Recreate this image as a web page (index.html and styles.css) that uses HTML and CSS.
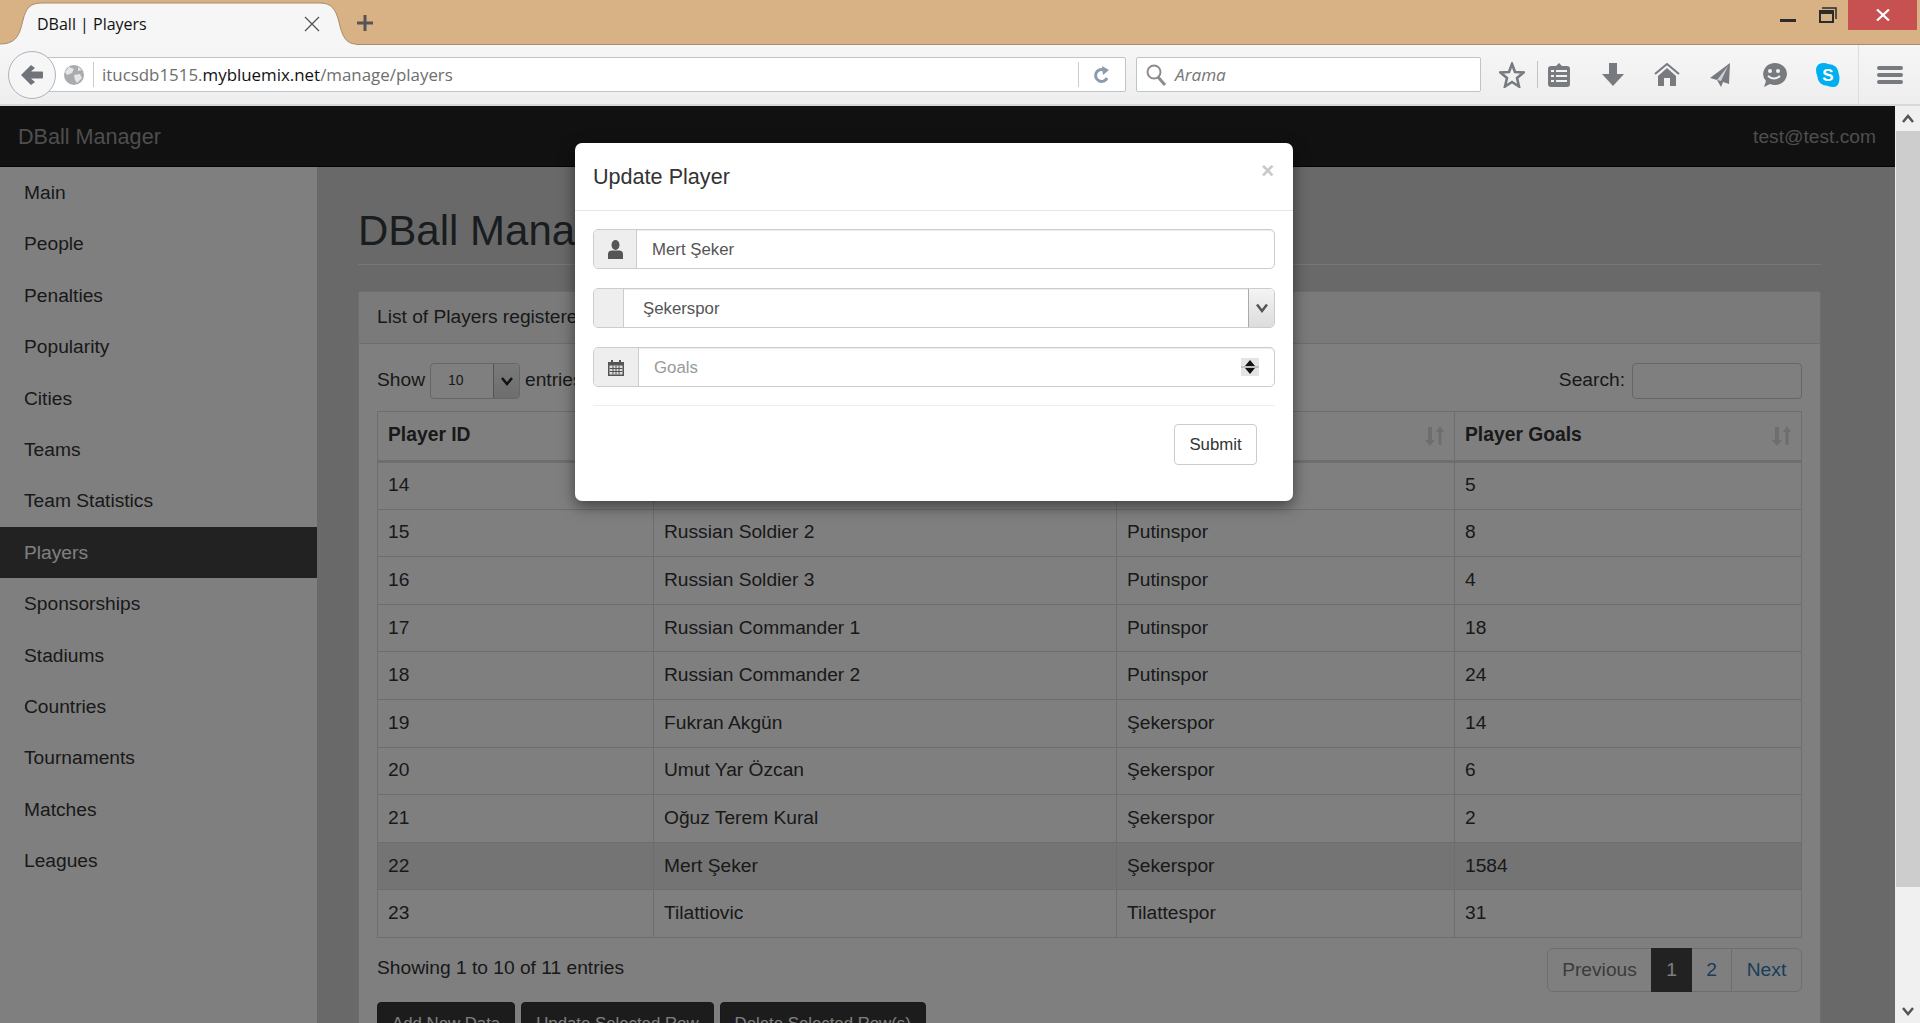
FILE: index.html
```html
<!DOCTYPE html>
<html lang="en">
<head>
    <meta charset="UTF-8">
    <title>DBall | Players</title>
    <link rel="stylesheet" href="styles.css">
</head>

<body>
    <header class="browser">
        <div class="tab-strip">
            <div class="tab">
                <svg class="tab-shape" width="356" height="45" viewBox="0 0 356 45"><path d="M0 45 V44 C18 44 20 32 23 20 C26 8 30 3 42 3 H320 C332 3 336 10 339 22 C342 36 346 44 356 44 V45 Z" fill="#f6f6f6"/><path d="M0 44 C18 44 20 32 23 20 C26 8 30 3 42 3 H320 C332 3 336 10 339 22 C342 36 346 44 356 44" fill="none" stroke="#a58c6a" stroke-width="1"/></svg>
                <span class="tab-title">DBall | Players</span>
                <svg class="tab-close" width="18" height="18" viewBox="0 0 18 18"><path d="M2 2 L16 16 M16 2 L2 16" stroke="#555" stroke-width="1.3" fill="none"/></svg>
            </div>
            <svg class="new-tab" width="20" height="20" viewBox="0 0 20 20"><path d="M10 2 V18 M2 10 H18" stroke="#555" stroke-width="3" fill="none"/></svg>
            <div class="win-controls">
                <svg class="win-min" width="16" height="3" viewBox="0 0 16 3"><rect width="16" height="3" fill="#2b2b2b"/></svg>
                <svg class="win-restore" width="18" height="16" viewBox="0 0 18 16"><path d="M3 1 H17 V12" stroke="#2b2b2b" stroke-width="1.5" fill="none"/><rect x="1" y="4" width="13" height="11" stroke="#2b2b2b" stroke-width="2" fill="none"/><rect x="1" y="4" width="13" height="3" fill="#2b2b2b"/></svg>
                <div class="win-close"><svg width="14" height="12" viewBox="0 0 14 12"><path d="M1 0.500 L13 11.500 M13 0.500 L1 11.500" stroke="#fff" stroke-width="2.200" fill="none"/></svg></div>
            </div>
        </div>
        <div class="toolbar">
            <div class="back-btn"><svg width="24" height="22" viewBox="0 0 24 22"><path d="M11 1 L1 11 L11 21 L15 18 L11 14.500 H22 Q23 14.500 23 13.500 V8.500 Q23 7.500 22 7.500 H11 L15 4 Z" fill="#70747a"/></svg></div>
            <div class="url-bar">
                <svg class="globe" width="22" height="22" viewBox="0 0 22 22"><circle cx="11" cy="11" r="10" fill="#a9abad"/><path d="M6 3 L11 5 L9 9 L4 11 L2 8 Z M11 11 L17 10 L19 14 L14 19 L12 16 Z M15 3 L19 6 L15 7 Z" fill="#e6e6e6"/></svg>
                <span class="url-text">itucsdb1515.<b>mybluemix.net</b>/manage/players</span>
                <span class="reload"><svg width="18" height="20" viewBox="0 0 18 20"><path d="M14 13 A6 6 0 1 1 11 5" stroke="#8a9bb0" stroke-width="3" fill="none"/><path d="M9 1 L16 5 L10 10 Z" fill="#8a9bb0"/></svg></span>
            </div>
            <div class="search-bar">
                <svg width="22" height="24" viewBox="0 0 22 24"><circle cx="9" cy="9" r="6.5" stroke="#8c8c8c" stroke-width="2" fill="none"/><path d="M13 14 L20 22" stroke="#8c8c8c" stroke-width="3"/></svg>
                <span>Arama</span>
            </div>
            <div class="tools">
                <svg class="tool-star" width="26" height="26" viewBox="0 0 26 26"><path d="M13 2 L16 10 L24.500 10.500 L18 16 L20 24.500 L13 20 L6 24.500 L8 16 L1.500 10.500 L10 10 Z" stroke="#777a7f" stroke-width="2.600" fill="none"/></svg>
                <span class="tool-sep"></span>
                <svg class="tool-clip" width="22" height="26" viewBox="0 0 22 26"><path d="M3 4 H8 L11 1 L14 4 H19 Q22 4 22 7 V22 Q22 25 19 25 H3 Q0 25 0 22 V7 Q0 4 3 4 Z" fill="#777a7f"/><path d="M3 9 H6 M8 9 H19 M3 14 H6 M8 14 H19 M3 19 H6 M8 19 H19" stroke="#f2f2f2" stroke-width="2"/></svg>
                <svg class="tool-down" width="22" height="24" viewBox="0 0 22 24"><path d="M7 0 H15 V11 H22 L11 23 L0 11 H7 Z" fill="#777a7f"/></svg>
                <svg class="tool-home" width="26" height="24" viewBox="0 0 26 24"><path d="M1 11 L13 1 L25 11" stroke="#777a7f" stroke-width="2" fill="none"/><path d="M13 5 L22 13 V23 H16 V15 H10 V23 H4 V13 Z" fill="#777a7f"/></svg>
                <svg class="tool-send" width="22" height="26" viewBox="0 0 22 26"><path d="M21 1 L1 16 L8 18 L12 25 L14 20 L20 22 Z" fill="#777a7f"/><path d="M8 18 L19 4 L12 19 Z" fill="#cfd0d2"/></svg>
                <svg class="tool-chat" width="26" height="26" viewBox="0 0 26 26"><path d="M13 1 A12 11 0 1 1 9 22 L3 25 L5 19 A12 11 0 0 1 13 1 Z" fill="#777a7f"/><circle cx="9" cy="9" r="2" fill="#f2f2f2"/><circle cx="17" cy="9" r="2" fill="#f2f2f2"/><path d="M7 14 Q13 19 19 14" stroke="#f2f2f2" stroke-width="2" fill="none"/></svg>
                <svg class="tool-skype" width="24" height="26" viewBox="0 0 24 26"><path d="M7 1 Q11 1 12 2 Q22 2 23 13 Q24 15 23 20 Q22 25 17 25 Q14 25 12 24 Q2 24 1 13 Q0 11 0 7 Q1 1 7 1 Z" fill="#00aff0"/><text x="12" y="19" class="skype-s">S</text></svg>
                <span class="tool-sep tool-sep-tall"></span>
                <svg class="tool-menu" width="26" height="20" viewBox="0 0 26 20"><path d="M2 3 H24 M2 10 H24 M2 17 H24" stroke="#777a7f" stroke-width="4" stroke-linecap="round"/></svg>
            </div>
        </div>
    </header>

    <div class="viewport">
        <div class="page">
            <nav class="navbar">
                <a class="brand">DBall Manager</a>
                <a class="nav-user">test@test.com</a>
            </nav>
            <div class="wrapper">
                <aside class="sidebar">
                    <a>Main</a>
                    <a>People</a>
                    <a>Penalties</a>
                    <a>Popularity</a>
                    <a>Cities</a>
                    <a>Teams</a>
                    <a>Team Statistics</a>
                    <a class="active">Players</a>
                    <a>Sponsorships</a>
                    <a>Stadiums</a>
                    <a>Countries</a>
                    <a>Tournaments</a>
                    <a>Matches</a>
                    <a>Leagues</a>
                </aside>
                <main class="content">
                    <h1>DBall Manager</h1>
                    <section class="panel">
                        <div class="panel-heading">List of Players registered in DBall</div>
                        <div class="panel-body">
                            <div class="table-top">
                                <div class="show-entries">
                                    <span>Show</span>
                                    <div class="mini-select"><span class="mini-value">10</span><span class="mini-arrow"><svg width="14" height="10" viewBox="0 0 14 10"><path d="M2 2 L7 8 L12 2" stroke="#222" stroke-width="2.500" fill="none"/></svg></span></div>
                                    <span>entries</span>
                                </div>
                                <label class="table-search"><span>Search:</span><input type="text"></label>
                            </div>
                            <table>
                                <thead>
                                    <tr>
                                        <th class="col-id">Player ID</th>
                                        <th class="col-name">Player Name</th>
                                        <th class="col-team">Player Team<svg class="sort-icon" width="20" height="20" viewBox="0 0 20 20"><path d="M4 1 H8 V14 H11 L6 20 L1 14 H4 Z M12 6 L16 0 L20 6 H17.500 V19 H14.500 V6 Z" fill="#dcdcdc"/></svg></th>
                                        <th>Player Goals<svg class="sort-icon" width="20" height="20" viewBox="0 0 20 20"><path d="M4 1 H8 V14 H11 L6 20 L1 14 H4 Z M12 6 L16 0 L20 6 H17.500 V19 H14.500 V6 Z" fill="#dcdcdc"/></svg></th>
                                    </tr>
                                </thead>
                                <tbody>
                                    <tr><td>14</td><td>Russian Soldier 1</td><td>Putinspor</td><td>5</td></tr>
                                    <tr><td>15</td><td>Russian Soldier 2</td><td>Putinspor</td><td>8</td></tr>
                                    <tr><td>16</td><td>Russian Soldier 3</td><td>Putinspor</td><td>4</td></tr>
                                    <tr><td>17</td><td>Russian Commander 1</td><td>Putinspor</td><td>18</td></tr>
                                    <tr><td>18</td><td>Russian Commander 2</td><td>Putinspor</td><td>24</td></tr>
                                    <tr><td>19</td><td>Fukran Akgün</td><td>Şekerspor</td><td>14</td></tr>
                                    <tr><td>20</td><td>Umut Yar Özcan</td><td>Şekerspor</td><td>6</td></tr>
                                    <tr><td>21</td><td>Oğuz Terem Kural</td><td>Şekerspor</td><td>2</td></tr>
                                    <tr class="selected"><td>22</td><td>Mert Şeker</td><td>Şekerspor</td><td>1584</td></tr>
                                    <tr><td>23</td><td>Tilattiovic</td><td>Tilattespor</td><td>31</td></tr>
                                </tbody>
                            </table>
                            <div class="table-bottom">
                                <span>Showing 1 to 10 of 11 entries</span>
                                <div class="pagination">
                                    <a class="page-prev">Previous</a>
                                    <a class="page-current">1</a>
                                    <a class="page-two">2</a>
                                    <a class="page-next">Next</a>
                                </div>
                            </div>
                            <div class="actions">
                                <button>Add New Data</button>
                                <button>Update Selected Row</button>
                                <button>Delete Selected Row(s)</button>
                            </div>
                        </div>
                    </section>
                </main>
            </div>

            <div class="backdrop">
                <div class="modal">
                    <div class="modal-header">
                        <h4>Update Player</h4>
                        <span class="modal-close">×</span>
                    </div>
                    <form class="modal-body">
                        <div class="input-group">
                            <span class="addon addon-user"><svg width="15" height="19" viewBox="0 0 15 19"><ellipse cx="7.500" cy="5" rx="4" ry="5" fill="#555"/><path d="M0 19 V14 Q0 10.500 4 10.500 H11 Q15 10.500 15 14 V19 Z" fill="#555"/></svg></span>
                            <input type="text" value="Mert Şeker">
                        </div>
                        <div class="input-group">
                            <span class="addon addon-blank"></span>
                            <select><option>Şekerspor</option></select>
                            <span class="select-arrow"><svg width="14" height="10" viewBox="0 0 14 10"><path d="M2 1.500 L7 8 L12 1.500" stroke="#555" stroke-width="2.500" fill="none"/></svg></span>
                        </div>
                        <div class="input-group">
                            <span class="addon addon-goals"><svg width="16" height="17" viewBox="0 0 16 17"><path d="M0 3 H3 V1 H5 V3 H11 V1 H13 V3 H16 V17 H0 Z" fill="#555"/><path d="M1.500 6.500 H14.500 V15.500 H1.500 Z" fill="#ddd"/><path d="M1.500 9.500 H14.500 M1.500 12.500 H14.500 M5 6.500 V15.500 M8 6.500 V15.500 M11 6.500 V15.500" stroke="#555" stroke-width="1"/></svg></span>
                            <input type="text" placeholder="Goals">
                            <span class="spinner"><svg width="18" height="18" viewBox="0 0 18 18"><rect width="18" height="18" fill="#e4e4e4"/><path d="M0 9 H18" stroke="#999" stroke-width="1"/><path d="M9 2 L14 8 H4 Z M9 16 L14 10 H4 Z" fill="#111"/></svg></span>
                        </div>
                        <hr>
                        <div class="modal-actions">
                            <button type="submit">Submit</button>
                        </div>
                    </form>
                </div>
            </div>
        </div>

        <div class="scrollbar">
            <span class="scroll-arrow"><svg width="14" height="10" viewBox="0 0 14 10"><path d="M2 8 L7 2 L12 8" stroke="#555" stroke-width="2.500" fill="none"/></svg></span>
            <span class="scroll-thumb"></span>
            <span class="scroll-arrow"><svg width="14" height="10" viewBox="0 0 14 10"><path d="M2 2 L7 8 L12 2" stroke="#555" stroke-width="2.500" fill="none"/></svg></span>
        </div>
    </div>
</body>
</html>
```

FILE: styles.css
```css
* {
    box-sizing: border-box;
}

html, body {
    height: 100%;
}

body {
    margin: 0;
    font-family: "Liberation Sans", Arial, sans-serif;
    color: #333;
    overflow: hidden;
    display: flex;
    flex-direction: column;
}

/* browser window */
.browser {
    flex: none;
    height: 106px;
    font-family: "Open Sans", sans-serif;
}

.tab-strip {
    height: 45px;
    background-color: #d8b284;
    border-bottom: 1px solid #a58c6a;
    display: flex;
    align-items: flex-start;
}

.tab {
    position: relative;
    flex: none;
    width: 356px;
    height: 45px;
    display: flex;
    align-items: center;
    justify-content: space-between;
    padding: 3px 35px 0 37px;
    font-size: 16px;
    color: #111;
}

.tab-shape {
    position: absolute;
    left: 0;
    top: 0;
}

.tab-title, .tab-close {
    position: relative;
}

.new-tab {
    margin: 13px 0 0 -1px;
}

.win-controls {
    margin-left: auto;
    margin-right: 3px;
    display: flex;
    align-items: flex-start;
}

.win-min {
    margin: 19px 23px 0 0;
}

.win-restore {
    margin: 7px 11px 0 0;
}

.win-close {
    width: 69px;
    height: 30px;
    background-color: #c75050;
    display: flex;
    align-items: center;
    justify-content: center;
}

.toolbar {
    height: 61px;
    background: linear-gradient(#f6f6f6, #eeeeee);
    border-bottom: 2px solid #d8d8d8;
    display: flex;
    align-items: center;
    padding-left: 8px;
    position: relative;
}

.back-btn {
    width: 48px;
    height: 48px;
    border-radius: 50%;
    border: 1px solid #aab4c0;
    background-color: #f6f6f6;
    display: flex;
    align-items: center;
    justify-content: center;
    position: relative;
    z-index: 1;
    flex: none;
}

.url-bar {
    width: 1078px;
    height: 35px;
    margin-left: -8px;
    padding-left: 14px;
    background-color: #fff;
    border: 1px solid #bcc4cc;
    border-radius: 0 2px 2px 0;
    display: flex;
    align-items: center;
    font-size: 16.900px;
    color: #6e6e6e;
}

.globe {
    margin-right: 8px;
}

.url-text {
    border-left: 1px solid #ccc;
    padding-left: 8px;
    line-height: 25px;
}

.url-text b {
    font-weight: 400;
    color: #111;
}

.reload {
    margin-left: auto;
    width: 47px;
    height: 25px;
    border-left: 1px solid #ccc;
    display: flex;
    align-items: center;
    justify-content: center;
}

.search-bar {
    width: 345px;
    height: 35px;
    margin-left: 10px;
    padding-left: 8px;
    background-color: #fff;
    border: 1px solid #bcc4cc;
    border-radius: 2px;
    display: flex;
    align-items: center;
    gap: 8px;
    font-size: 17.200px;
    font-style: italic;
    color: #777;
}

.tools {
    display: flex;
    align-items: center;
    flex: 1;
    height: 100%;
}

.tool-star {
    margin-left: 18px;
}

.tool-sep {
    width: 1px;
    height: 27px;
    margin: 0 9.500px 0 12px;
    background-color: #c4c4c4;
}

.tool-sep-tall {
    height: 100%;
    margin: 0 18px;
    background-color: #dedede;
}

.tool-down {
    margin-left: 32px;
}

.tool-home {
    margin-left: 30px;
}

.tool-send {
    margin-left: 29px;
}

.tool-chat {
    margin-left: 30px;
}

.tool-skype {
    margin-left: 29px;
}

.skype-s {
    font-family: "Liberation Sans", sans-serif;
    font-size: 17px;
    font-weight: 700;
    fill: #fff;
    text-anchor: middle;
}

/* page under the dialog */
.viewport {
    flex: 1;
    display: flex;
    min-height: 0;
}

.page {
    flex: 1;
    position: relative;
    overflow: hidden;
    font-size: 19.200px;
}

.navbar {
    height: 61px;
    background-color: #222;
    border-bottom: 1px solid #080808;
    display: flex;
    align-items: center;
    justify-content: space-between;
    padding: 2px 19px 0 18px;
    color: #9d9d9d;
}

.brand {
    font-size: 21.600px;
}

.nav-user {
    font-size: 19.200px;
}

.wrapper {
    display: flex;
    align-items: flex-start;
}

.sidebar {
    width: 317px;
    flex: none;
    height: 1000px;
    background-color: #fff;
    display: flex;
    flex-direction: column;
}

.sidebar a {
    height: 51.400px;
    flex: none;
    padding-left: 24px;
    line-height: 52px;
    color: #333;
}

.sidebar a.active {
    background-color: #444;
    color: #fff;
}

.content {
    flex: 1;
    height: 1000px;
    background-color: #d3d3d3;
    padding: 0 74px 0 41px;
}

.content h1 {
    margin: 41px 0 0;
    height: 57px;
    border-bottom: 1px solid #eee;
    font-size: 42px;
    font-weight: 400;
    line-height: 46px;
    color: #333a40;
    white-space: nowrap;
}

.panel {
    margin-top: 26px;
    background-color: #fff;
    border-radius: 4px;
    border: 1px solid #ddd;
}

.panel-heading {
    height: 52px;
    background-color: #f5f5f5;
    border-bottom: 1px solid #ddd;
    padding-left: 18px;
    line-height: 50px;
}

.panel-body {
    padding: 18px 18px 0;
}

.table-top {
    display: flex;
    justify-content: space-between;
    align-items: center;
    height: 37px;
}

.show-entries {
    display: flex;
    align-items: center;
    gap: 5px;
}

.show-entries > span {
    padding-bottom: 2px;
}

.mini-select {
    width: 90px;
    height: 36px;
    border: 1px solid #ccc;
    border-radius: 4px;
    display: flex;
    justify-content: space-between;
    overflow: hidden;
    background-color: #fff;
}

.mini-value {
    font-size: 14px;
    line-height: 33px;
    padding-left: 17px;
}

.mini-arrow {
    width: 26px;
    background: linear-gradient(#f4f4f4, #dcdcdc);
    border-left: 1px solid #aaa;
    display: flex;
    align-items: center;
    justify-content: center;
}

.table-search {
    display: flex;
    align-items: center;
    gap: 7px;
}

.table-search span {
    padding-bottom: 1px;
}

.table-search input {
    width: 170px;
    height: 36px;
    border: 1px solid #ccc;
    border-radius: 4px;
}

table {
    width: 100%;
    margin-top: 12px;
    border-collapse: collapse;
    table-layout: fixed;
}

th, td {
    border: 1px solid #ddd;
    padding: 0 10px;
    text-align: left;
}

th {
    height: 50px;
    padding-bottom: 2px;
    border-bottom-width: 3px;
    font-size: 19.300px;
    position: relative;
}

td {
    height: 47.600px;
    padding-bottom: 1px;
}

.col-id {
    width: 276px;
}

.col-name {
    width: 463px;
}

.col-team {
    width: 338px;
}

.sort-icon {
    position: absolute;
    right: 10px;
    top: 14px;
}

tr.selected td {
    background-color: #e8e8e8;
}

.table-bottom {
    display: flex;
    justify-content: space-between;
    align-items: flex-start;
    margin-top: 10px;
}

.table-bottom > span {
    margin-top: 9px;
}

.pagination {
    display: flex;
    height: 44px;
    border: 1px solid #ddd;
    border-radius: 6px;
    line-height: 42px;
    color: #337ab7;
}

.pagination a {
    text-align: center;
}

.page-prev {
    width: 103px;
    color: #777;
}

.page-current {
    width: 41px;
    margin: -1px 0;
    line-height: 44px;
    background-color: #444;
    color: #fff;
}

.page-two {
    width: 40px;
    border-right: 1px solid #ddd;
}

.page-next {
    width: 69px;
}

.actions {
    display: flex;
    gap: 6px;
    margin-top: 10px;
}

.actions button {
    height: 44px;
    padding: 0 14px;
    background-color: #383838;
    border: 1px solid #333;
    border-radius: 4px;
    color: #fff;
    font-family: inherit;
    font-size: 16.800px;
}

/* dialog */
.backdrop {
    position: absolute;
    inset: 0;
    background-color: rgba(0, 0, 0, 0.5);
    padding: 37px 0 0 575px;
}

.modal {
    width: 718px;
    height: 358px;
    background-color: #fff;
    border-radius: 7px;
    box-shadow: 0 5px 15px rgba(0, 0, 0, 0.5);
    font-size: 16.800px;
}

.modal-header {
    height: 68px;
    border-bottom: 1px solid #e5e5e5;
    display: flex;
    justify-content: space-between;
    align-items: flex-start;
    padding: 0 18px;
}

.modal-header h4 {
    margin: 21px 0 0;
    font-size: 21.600px;
    font-weight: 400;
    line-height: 26px;
}

.modal-close {
    margin: 16px 1px 0 0;
    font-size: 22px;
    font-weight: 700;
    line-height: 24px;
    color: #c8c8c8;
}

.modal-body {
    padding: 18px 18px 0;
    display: flex;
    flex-direction: column;
    gap: 19px;
}

.input-group {
    height: 40px;
    display: flex;
    border: 1px solid #ccc;
    border-radius: 5px;
    overflow: hidden;
    background-color: #fff;
    box-shadow: inset 0 1px 1px rgba(0, 0, 0, 0.075);
}

.addon {
    flex: none;
    background-color: #eee;
    border-right: 1px solid #ccc;
    display: flex;
    align-items: center;
    justify-content: center;
}

.addon-user {
    width: 43px;
}

.addon-blank {
    width: 30px;
}

.addon-goals {
    width: 45px;
}

.input-group input, .input-group select {
    flex: 1;
    min-width: 0;
    border: none;
    outline: none;
    background: transparent;
    font-family: inherit;
    font-size: inherit;
    color: #555;
    padding: 1px 15px 0;
}

.input-group select {
    appearance: none;
    padding: 0 15px 0 19px;
}

.input-group input::placeholder {
    color: #999;
}

.select-arrow {
    flex: none;
    width: 26px;
    background: linear-gradient(#f4f4f4, #dcdcdc);
    border-left: 1px solid #aaa;
    display: flex;
    align-items: center;
    justify-content: center;
}

.spinner {
    flex: none;
    display: flex;
    align-items: center;
    padding-right: 15px;
}

.modal-body hr {
    margin: -1px 0 0;
    border: none;
    border-top: 1px solid #eee;
}

.modal-actions {
    display: flex;
    justify-content: flex-end;
    margin-top: -1px;
    padding-right: 18px;
}

.modal-actions button {
    width: 83px;
    height: 41px;
    background-color: #fff;
    border: 1px solid #ccc;
    border-radius: 4px;
    font-family: inherit;
    font-size: 16.800px;
    color: #333;
}

/* window scrollbar */
.scrollbar {
    flex: none;
    width: 25px;
    background-color: #f0f0f0;
    display: flex;
    flex-direction: column;
    padding-left: 1px;
}

.scroll-arrow {
    flex: none;
    height: 25px;
    display: flex;
    align-items: center;
    justify-content: center;
}

.scroll-thumb {
    flex: none;
    height: 756px;
    background-color: #cdcdcd;
}

.scroll-thumb + .scroll-arrow {
    margin-top: auto;
}
```
